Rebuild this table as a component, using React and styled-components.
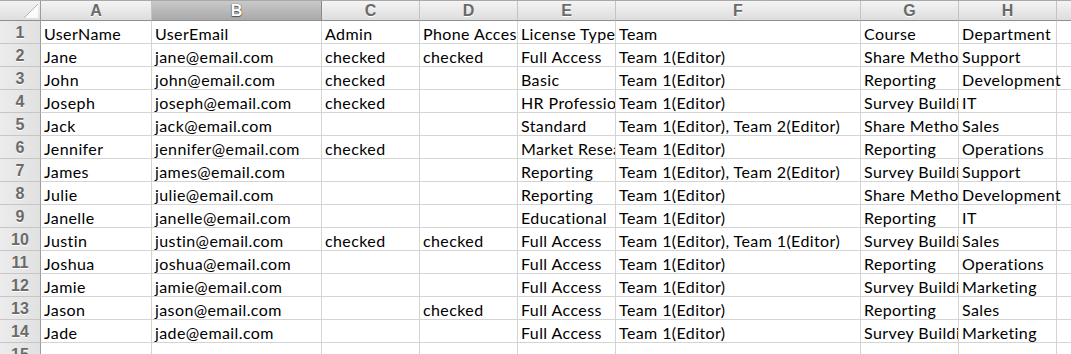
import React from "react";
import styled, { createGlobalStyle, css } from "styled-components";

const GlobalStyle = createGlobalStyle`
  html, body {
    margin: 0;
    padding: 0;
    background: #ffffff;
  }
  body {
    font-family: Lato, "Open Sans", sans-serif;
    overflow: hidden;
  }
`;

const COLS = [
  { key: "A", width: 111 },
  { key: "B", width: 170 },
  { key: "C", width: 98 },
  { key: "D", width: 98 },
  { key: "E", width: 98 },
  { key: "F", width: 245 },
  { key: "G", width: 98 },
  { key: "H", width: 98 },
  { key: "I", width: 98 },
];

const ROWS = [
  ["UserName", "UserEmail", "Admin", "Phone Access", "License Type", "Team", "Course", "Department"],
  ["Jane", "jane@email.com", "checked", "checked", "Full Access", "Team 1(Editor)", "Share Methods", "Support"],
  ["John", "john@email.com", "checked", "", "Basic", "Team 1(Editor)", "Reporting", "Development"],
  ["Joseph", "joseph@email.com", "checked", "", "HR Professional", "Team 1(Editor)", "Survey Building", "IT"],
  ["Jack", "jack@email.com", "", "", "Standard", "Team 1(Editor), Team 2(Editor)", "Share Methods", "Sales"],
  ["Jennifer", "jennifer@email.com", "checked", "", "Market Research", "Team 1(Editor)", "Reporting", "Operations"],
  ["James", "james@email.com", "", "", "Reporting", "Team 1(Editor), Team 2(Editor)", "Survey Building", "Support"],
  ["Julie", "julie@email.com", "", "", "Reporting", "Team 1(Editor)", "Share Methods", "Development"],
  ["Janelle", "janelle@email.com", "", "", "Educational", "Team 1(Editor)", "Reporting", "IT"],
  ["Justin", "justin@email.com", "checked", "checked", "Full Access", "Team 1(Editor), Team 1(Editor)", "Survey Building", "Sales"],
  ["Joshua", "joshua@email.com", "", "", "Full Access", "Team 1(Editor)", "Reporting", "Operations"],
  ["Jamie", "jamie@email.com", "", "", "Full Access", "Team 1(Editor)", "Survey Building", "Marketing"],
  ["Jason", "jason@email.com", "", "checked", "Full Access", "Team 1(Editor)", "Reporting", "Sales"],
  ["Jade", "jade@email.com", "", "", "Full Access", "Team 1(Editor)", "Survey Building", "Marketing"],
  [],
];

const Sheet = styled.div`
  display: flex;
  flex-direction: column;
  width: 1071px;
  height: 354px;
  overflow: hidden;
  background: #ffffff;
`;

const TopEdge = styled.div`
  height: 4px;
  box-sizing: border-box;
  background: #f1f1f1;
  border-bottom: 1px solid #a9a9a9;
`;

const Grid = styled.div`
  display: grid;
  grid-template-columns: 41px ${COLS.map((c) => `${c.width}px`).join(" ")};
  grid-auto-rows: 23px;
  grid-template-rows: 20px;
`;

const headLabel = css`
  font-family: "Liberation Sans", Arial, sans-serif;
  font-weight: bold;
  font-size: 16px;
  color: #6a6a6a;
`;

const Corner = styled.div`
  position: relative;
  box-sizing: border-box;
  background: linear-gradient(#f3f3f3, #dedede);
  border-right: 1px solid #9c9c9c;
  border-bottom: 1px solid #8f8f8f;
`;

const CornerMark = styled.svg`
  position: absolute;
  right: 2px;
  bottom: 2px;
`;

const ColHead = styled.div`
  ${headLabel};
  box-sizing: border-box;
  display: flex;
  align-items: center;
  justify-content: center;
  line-height: 1;
  padding-top: 1px;
  background: ${(p) =>
    p.$selected
      ? "linear-gradient(#c9c9c9, #a9a9a9)"
      : "linear-gradient(#f4f4f4, #dddddd)"};
  color: ${(p) => (p.$selected ? "#ffffff" : "#6a6a6a")};
  text-shadow: ${(p) =>
    p.$selected ? "0 0 1px #333, 0 1px 1px #555" : "0 1px 0 #ffffff"};
  border-right: 1px solid ${(p) => (p.$selected ? "#8a8a8a" : "#c3c3c3")};
  border-bottom: 1px solid #8f8f8f;
`;

const RowNum = styled.div`
  ${headLabel};
  box-sizing: border-box;
  display: flex;
  align-items: center;
  justify-content: center;
  padding-top: 2px;
  background: linear-gradient(90deg, #ececec, #e1e1e1);
  text-shadow: 0 1px 0 #ffffff;
  border-right: 1px solid #9c9c9c;
  border-bottom: 1px solid #c6c6c6;
`;

// text runs on into the next cell when that one is empty, as in a spreadsheet
const Cell = styled.div`
  box-sizing: border-box;
  display: flex;
  align-items: center;
  padding: 3px 0 0 3px;
  font-size: 16px;
  letter-spacing: 0.4px;
  color: #000000;
  white-space: nowrap;
  overflow: ${(p) => (p.$spill ? "visible" : "hidden")};
  position: relative;
  z-index: ${(p) => (p.$spill ? 1 : 0)};
  border-right: 1px solid #d4d4d4;
  border-bottom: 1px solid #d4d4d4;
`;

export default function App() {
  return (
    <>
      <GlobalStyle />
      <Sheet>
        <TopEdge />
        <Grid>
          <Corner>
            <CornerMark width="14" height="14" viewBox="0 0 14 14">
              <polygon points="14,0 14,14 0,14" fill="#fbfbfb" />
              <line x1="14" y1="0" x2="0" y2="14" stroke="#b6b6b6" strokeWidth="1" />
            </CornerMark>
          </Corner>
          {COLS.map((c) => (
            <ColHead key={c.key} $selected={c.key === "B"}>
              {c.key === "I" ? "" : c.key}
            </ColHead>
          ))}
          {ROWS.map((row, r) => (
            <React.Fragment key={r}>
              <RowNum>{r + 1}</RowNum>
              {COLS.map((c, i) => (
                <Cell key={c.key} $spill={!!row[i] && !row[i + 1]}>
                  {row[i] || ""}
                </Cell>
              ))}
            </React.Fragment>
          ))}
        </Grid>
      </Sheet>
    </>
  );
}
